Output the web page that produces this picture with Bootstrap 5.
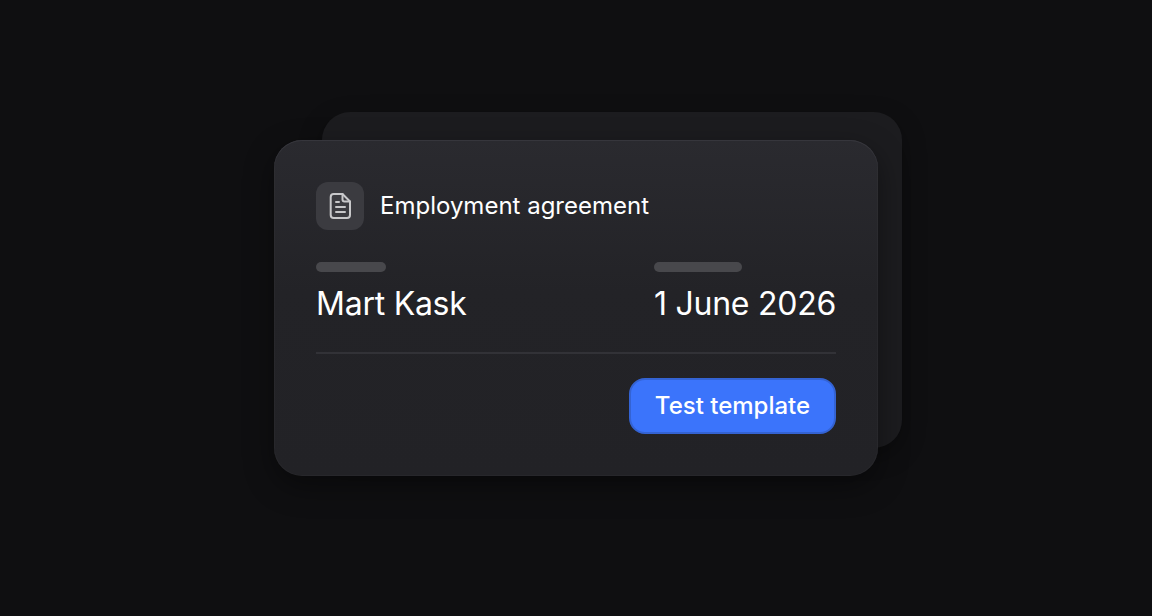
<!DOCTYPE html>
<html lang="en">
<head>
    <meta charset="UTF-8">
    <meta name="viewport" content="width=device-width, initial-scale=1.0">
    <title>Employment agreement</title>

    <link href="https://cdn.jsdelivr.net/npm/bootstrap@5.3.2/dist/css/bootstrap.min.css" rel="stylesheet">

    <style>
        body {
            background-color: #0f0f11;
            color: #fff;
            font-family: "Inter", sans-serif;
            height: 616px;
            overflow: hidden;
        }

        .stage {
            height: 616px;
        }

        .card-wrap {
            width: 604px;
            height: 336px;
        }

        .back-sheet {
            position: absolute;
            top: -28px;
            left: 48px;
            right: -24px;
            bottom: 28px;
            background-color: #1c1c1f;
            border-radius: 28px;
            box-shadow: 0 8px 24px rgba(0, 0, 0, 0.3);
        }

        .front-sheet {
            position: relative;
            height: 100%;
            padding: 42px;
            background: linear-gradient(180deg, #2a2a2f 0%, #232327 45%, #222226 100%);
            border-radius: 28px;
            box-shadow: inset 0 1px 0 #36363c, inset 0 0 0 1px rgba(255, 255, 255, 0.025), 0 10px 30px rgba(0, 0, 0, 0.4);
        }

        .doc-tile {
            width: 48px;
            height: 48px;
            background-color: #3b3b40;
            border-radius: 12px;
            color: #c8c8ca;
        }

        .doc-title {
            font-size: 24px;
            line-height: 32px;
        }

        .stub {
            height: 10px;
            background-color: #48484c;
            border-radius: 5px;
        }

        .stub-a { width: 70px; }
        .stub-b { width: 88px; }

        .meta-value {
            font-size: 32px;
            line-height: 40px;
            letter-spacing: -0.25px;
            margin-top: 12px;
        }

        .meta-row {
            margin-top: 32px;
        }

        .rule {
            height: 2px;
            background-color: #323237;
            margin-top: 28px;
            margin-bottom: 24px;
        }

        .btn-test {
            width: 207px;
            height: 56px;
            font-size: 24px;
            font-weight: 500;
            line-height: 32px;
            color: #fff;
            background-color: #3b74fb;
            border: 2px solid #3463d3;
            border-radius: 16px;
            padding: 0;
        }
    </style>
</head>
<body>
    <div class="stage d-flex align-items-center justify-content-center">
        <div class="card-wrap position-relative">
            <div class="back-sheet"></div>
            <div class="front-sheet">
                <div class="d-flex align-items-center gap-3">
                    <div class="doc-tile d-flex align-items-center justify-content-center">
                        <svg width="26" height="28" viewBox="0 0 26 28" fill="none" stroke="currentColor" stroke-width="2" stroke-linecap="round" stroke-linejoin="round">
                            <path d="M15.500 2H6.700a3 3 0 0 0-3 3v18a3 3 0 0 0 3 3h13.300a3 3 0 0 0 3-3V9.500z"/>
                            <path d="M15.500 2v5.500a2 2 0 0 0 2 2H23"/>
                            <path d="M9 10h3M9 15h9M9 20h9"/>
                        </svg>
                    </div>
                    <div class="doc-title">Employment agreement</div>
                </div>

                <div class="meta-row d-flex justify-content-between">
                    <div>
                        <div class="stub stub-a"></div>
                        <div class="meta-value">Mart Kask</div>
                    </div>
                    <div>
                        <div class="stub stub-b"></div>
                        <div class="meta-value">1 June 2026</div>
                    </div>
                </div>

                <div class="rule"></div>

                <div class="d-flex justify-content-end">
                    <button type="button" class="btn btn-test">Test template</button>
                </div>
            </div>
        </div>
    </div>

    <script src="https://cdn.jsdelivr.net/npm/bootstrap@5.3.2/dist/js/bootstrap.bundle.min.js"></script>
</body>
</html>
